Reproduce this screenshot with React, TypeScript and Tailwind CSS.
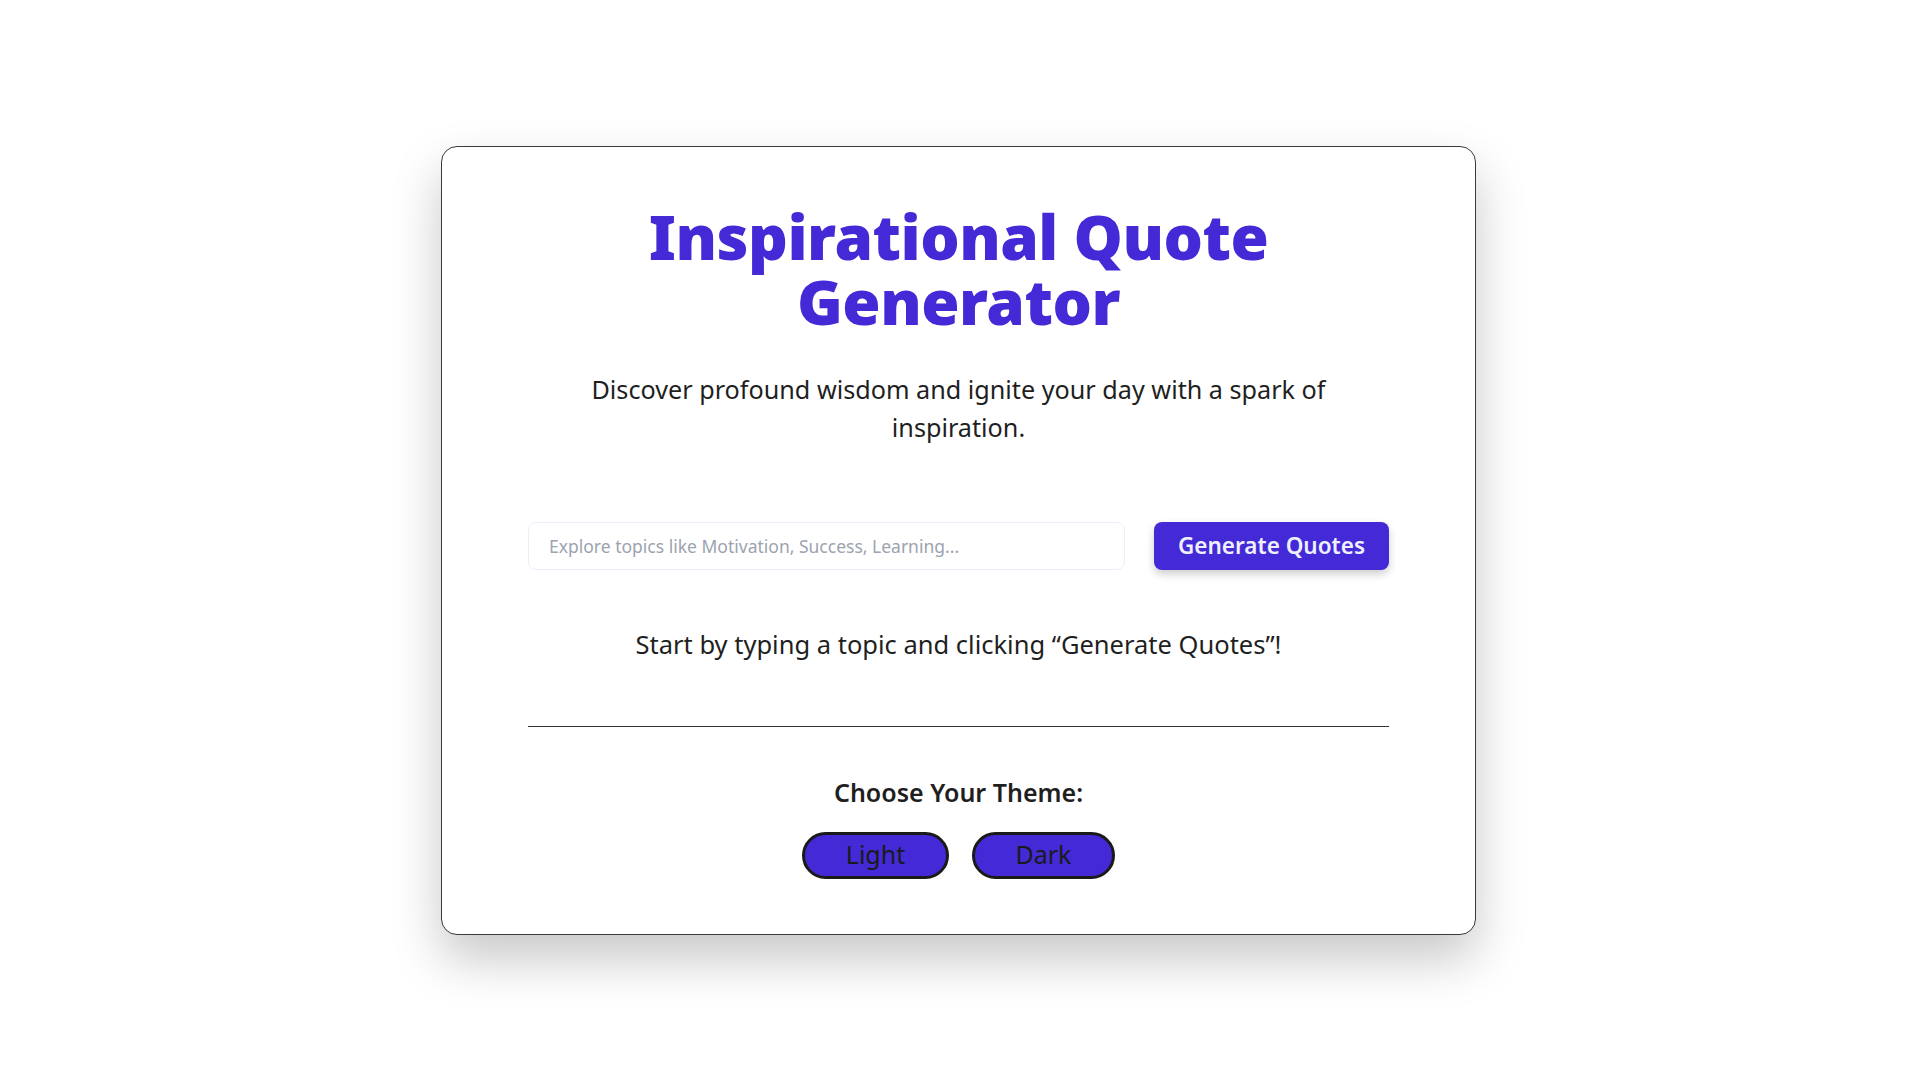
import { useState } from "react";

const font = { fontFamily: '"Noto Sans", "Open Sans", sans-serif' };

export default function App() {
  const [topic, setTopic] = useState("");

  return (
    <div className="min-h-screen w-full bg-white flex items-center justify-center pt-[5px]" style={font}>
      <div className="w-[1035px] rounded-2xl border border-[#3a3a3a] bg-white px-[86px] pt-[57px] pb-[55px] shadow-[0_24px_50px_rgba(0,0,0,0.22)] flex flex-col items-center">
        <h1 className="text-center text-[62px] leading-[65px] font-black text-[#432ad6] tracking-[-0.5px]">
          Inspirational Quote
          <br />
          Generator
        </h1>
        <p className="mt-[36px] w-[790px] text-center text-[25.2px] leading-[38px] text-[#1f1f1f]">
          Discover profound wisdom and ignite your day with a spark of inspiration.
        </p>

        <div className="mt-[76px] flex w-full items-center gap-[29px]">
          <input
            value={topic}
            onChange={(e) => setTopic(e.target.value)}
            placeholder="Explore topics like Motivation, Success, Learning..."
            className="h-12 flex-1 rounded-lg border border-[#efedfb] bg-white px-5 text-[17.5px] text-gray-800 placeholder:text-[#9ca3af] outline-none"
          />
          <button className="h-12 w-[235px] rounded-lg bg-[#432ad6] text-[22.5px] font-semibold text-[#eef0ff] shadow-[0_4px_8px_rgba(0,0,0,0.2)]">
            Generate Quotes
          </button>
        </div>

        <p className="mt-[55px] text-center text-[25.5px] leading-[38px] text-[#1f1f1f]">
          Start by typing a topic and clicking “Generate Quotes”!
        </p>

        <hr className="mt-[63px] w-full border-t border-[#333]" />

        <h2 className="mt-[49px] text-[25px] leading-[32px] font-semibold text-[#1f1f1f]">
          Choose Your Theme:
        </h2>
        <div className="mt-[24px] flex gap-[23px]">
          <button className="h-[47px] w-[147px] rounded-full border-[3px] border-[#1a1a1a] bg-[#432ad6] text-[25px] text-[#1a1a1a]">
            Light
          </button>
          <button className="h-[47px] w-[143px] rounded-full border-[3px] border-[#1a1a1a] bg-[#432ad6] text-[25px] text-[#1a1a1a]">
            Dark
          </button>
        </div>
      </div>
    </div>
  );
}
